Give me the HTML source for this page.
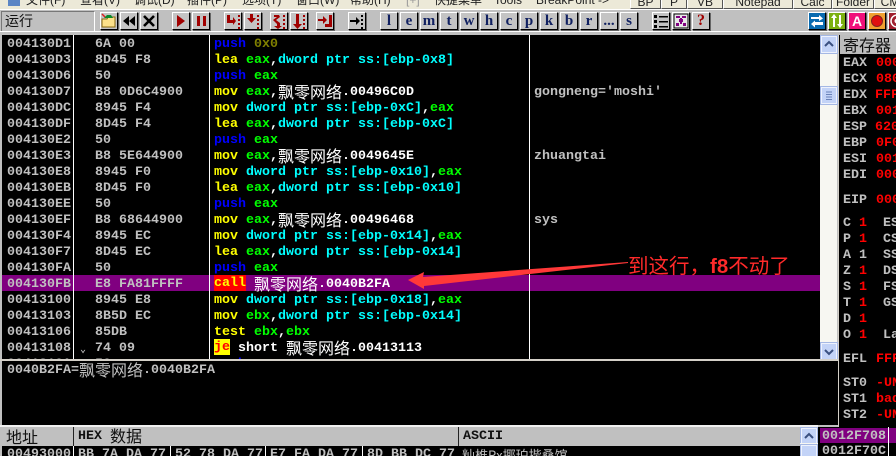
<!DOCTYPE html>
<html><head><meta charset="utf-8">
<style>
html,body{margin:0;padding:0;width:896px;height:456px;overflow:hidden;background:#c0c0c0}
#p{position:relative;width:896px;height:456px;overflow:hidden;background:#c0c0c0;font-family:"Liberation Mono","Noto Sans CJK SC",monospace;font-size:13.33px;font-weight:bold}
.a{position:absolute}
.t{position:absolute;white-space:pre;line-height:16px;height:16px;margin-top:2px}
.g{color:#c0c0c0}.w{color:#fff}.y{color:#ff0}.b{color:#00f}.l{color:#0f0}.c{color:#0ff}.o{color:#808000}.r{color:#f00}
.z{font-family:"Noto Sans CJK SC","WenQuanYi Zen Hei",sans-serif;font-size:16px;font-weight:normal;line-height:16px}
.t .z{display:inline-block;height:16px;vertical-align:top;position:relative;top:-2px}
.hl{display:inline-block;height:16px;vertical-align:top;position:relative;top:-2px;padding-top:2px;height:14px;line-height:14px}
.btn{position:absolute;top:12px;width:16px;height:16px;background:#c4c4c4;border:1px solid;border-color:#fff #000 #000 #fff;box-shadow:1px 1px 0 #666;overflow:hidden}
.btn svg{display:block;width:16px;height:16px}
.ltr{font-family:"Liberation Serif",serif;font-size:15px;color:#102060;text-align:center;line-height:16px;font-weight:bold}
.m{position:absolute;top:-7px;font:12px/14px "Liberation Sans","Noto Sans CJK SC",sans-serif;color:#222;white-space:pre}
.tb{position:absolute;top:-4px;height:11px;background:#ece9d8;border:1px solid;border-color:#fff #555 #555 #fff;font:12px/10px "Liberation Sans",sans-serif;color:#222;text-align:center;overflow:hidden}
.sb{position:absolute;width:14px;height:15px;background:#c3d3f7;border:1px solid #eef2fd;box-shadow:0 0 0 1px #a5b8e4}
</style></head><body><div id="p">

<!-- menu -->
<div class="a" style="left:0;top:0;width:896px;height:9px;background:#ece9d8;overflow:hidden">
<div class="a" style="left:8px;top:-6px;width:12px;height:12px;background:#5b85c5"></div>
<span class="m" style="left:26px">文件(F)</span><span class="m" style="left:80px">查看(V)</span><span class="m" style="left:134px">调试(D)</span><span class="m" style="left:187px">插件(P)</span><span class="m" style="left:242px">选项(T)</span><span class="m" style="left:296px">窗口(W)</span><span class="m" style="left:350px">帮助(H)</span><span class="m" style="left:406px;color:#999">[+]</span><span class="m" style="left:434px">快捷菜单</span><span class="m" style="left:494px">Tools</span><span class="m" style="left:536px">BreakPoint -&gt;</span>
<div class="tb" style="left:630px;width:29px">BP</div><div class="tb" style="left:661px;width:24px">P</div><div class="tb" style="left:687px;width:34px">VB</div><div class="tb" style="left:723px;width:68px">Notepad</div><div class="tb" style="left:793px;width:37px">Calc</div><div class="tb" style="left:832px;width:40px">Folder</div><div class="tb" style="left:874px;width:30px">CM</div>
</div>
<div class="a" style="left:0;top:9px;width:896px;height:1px;background:#fff"></div>

<!-- toolbar -->
<div class="a" style="left:1px;top:11px;width:92px;height:19px;border:1px solid;border-color:#777 #fff #fff #777"></div>
<div class="a z" style="left:5px;top:12px;font-size:14px;line-height:18px;color:#111">运行</div>

<div class="btn" style="left:100px"><svg viewBox="0 0 16 16"><path d="M1 6h5l1-2h7v10H1z" fill="#fde28a" stroke="#8a6a10"/><path d="M3 5l3-3 4 0 2 3z" fill="#0a8a2a"/><path d="M1 1l3 3" stroke="#e02020" stroke-width="1.5"/></svg></div>
<div class="btn" style="left:120px"><svg viewBox="0 0 16 16"><path d="M8 3v10L2 8zM14 3v10L8 8z" fill="#000"/></svg></div>
<div class="btn" style="left:140px"><svg viewBox="0 0 16 16"><path d="M3 3l10 10M13 3L3 13" stroke="#000" stroke-width="2.6"/></svg></div>
<div class="btn" style="left:172px"><svg viewBox="0 0 16 16"><path d="M4 2l8 6-8 6z" fill="#a00000"/></svg></div>
<div class="btn" style="left:192px"><svg viewBox="0 0 16 16"><path d="M4 3h3v10H4zM10 3h3v10h-3z" fill="#a00000"/></svg></div>
<div class="btn" style="left:224px"><svg viewBox="0 0 16 16"><path d="M2 2h3v5h3V4l3 4-3 4V10H2z" fill="#a00000"/><path d="M13 2h2v2h-2zM13 6h2v2h-2zM13 10h2v2h-2zM13 14h2v2h-2z" fill="#a00000"/></svg></div>
<div class="btn" style="left:244px"><svg viewBox="0 0 16 16"><path d="M5 1h3v4h3L6.500 10 2 5h3z" fill="#a00000"/><path d="M12 2h2v2h-2zM12 6h2v2h-2zM12 10h2v2h-2zM12 14h2v2h-2z" fill="#a00000"/></svg></div>
<div class="btn" style="left:270px"><svg viewBox="0 0 16 16"><path d="M3 2h5l1 2-4 3 4 3v3h2l-4 3-4-3h3v-2L2 7l4-3H3z" fill="#a00000"/><path d="M12 2h2v2h-2zM12 6h2v2h-2zM12 10h2v2h-2zM12 14h2v2h-2z" fill="#a00000"/></svg></div>
<div class="btn" style="left:290px"><svg viewBox="0 0 16 16"><path d="M5 1h3v10h3l-4.500 5L2 11h3z" fill="#a00000"/><path d="M12 2h2v2h-2zM12 6h2v2h-2zM12 10h2v2h-2zM12 14h2v2h-2z" fill="#a00000"/></svg></div>
<div class="btn" style="left:316px"><svg viewBox="0 0 16 16"><path d="M1 6h5V3l4 4-4 4V8H1z" fill="#a00000"/><path d="M12 2h3v12H8v-3h4z" fill="#a00000"/></svg></div>
<div class="btn" style="left:348px"><svg viewBox="0 0 16 16"><path d="M1 7h6V4l4 4-4 4V9H1z" fill="#000"/><path d="M12 2h2v2h-2zM12 6h2v2h-2zM12 10h2v2h-2zM12 14h2v2h-2z" fill="#000"/></svg></div>

<div class="btn ltr" style="left:380px">l</div>
<div class="btn ltr" style="left:400px">e</div>
<div class="btn ltr" style="left:420px">m</div>
<div class="btn ltr" style="left:440px">t</div>
<div class="btn ltr" style="left:460px">w</div>
<div class="btn ltr" style="left:480px">h</div>
<div class="btn ltr" style="left:500px">c</div>
<div class="btn ltr" style="left:520px">p</div>
<div class="btn ltr" style="left:540px">k</div>
<div class="btn ltr" style="left:560px">b</div>
<div class="btn ltr" style="left:580px">r</div>
<div class="btn ltr" style="left:600px">...</div>
<div class="btn ltr" style="left:620px">s</div>

<div class="btn" style="left:652px"><svg viewBox="0 0 16 16"><path d="M1 2h3v3H1zM1 7h3v3H1zM1 12h3v3H1zM6 3h9v1.500H6zM6 8h9v1.500H6zM6 13h9v1.500H6z" fill="#000"/></svg></div>
<div class="btn" style="left:672px;background:#e8e8e8"><svg viewBox="0 0 16 16"><rect x="1" y="1" width="14" height="14" fill="none" stroke="#000"/><path d="M3 3h4v2H3zM9 3h4v2H9zM6 6h4v3H6zM3 10h3v3H3zM10 10h3v3h-3zM7 5h2v6H7z" fill="#800080"/></svg></div>
<div class="btn" style="left:692px;color:#a00000;font:bold 16px/16px 'Liberation Serif',serif;text-align:center">?</div>

<div class="btn" style="left:808px;background:#0a6bb0"><svg viewBox="0 0 16 16"><path d="M2 4h8V2l4 3.500L10 8V6H2zM14 9H6V7.500L2 11l4 3.500V12h8z" fill="#fff"/></svg></div>
<div class="btn" style="left:828px;background:#7cb010"><svg viewBox="0 0 16 16"><path d="M5 1l3 4H6v9H4V5H2zM11 15l-3-4h2V2h2v9h2z" fill="#fff"/></svg></div>
<div class="btn" style="left:848px;background:#f0107a;color:#fff;font:bold 14px/16px 'Liberation Sans',sans-serif;text-align:center">A</div>
<div class="btn" style="left:868px;background:#f0a030"><svg viewBox="0 0 16 16"><circle cx="8" cy="8" r="5.500" fill="#e01010" stroke="#802020"/></svg></div>
<div class="btn" style="left:888px;background:#a02030"><svg viewBox="0 0 16 16"><circle cx="8" cy="8" r="6" fill="none" stroke="#fff" stroke-width="1.500"/><circle cx="8" cy="8" r="2.500" fill="#fff"/></svg></div>

<div class="a" style="left:0;top:31px;width:896px;height:1px;background:#fff"></div>

<!-- CPU pane -->
<div class="a" style="left:2px;top:35px;width:818px;height:324px;background:#000;overflow:hidden">
<div class="a" style="left:0;top:240px;width:818px;height:16px;background:#800080"></div>
<div class="a" style="left:71px;top:0;width:1px;height:324px;background:#fff"></div>
<div class="a" style="left:207px;top:0;width:1px;height:324px;background:#fff"></div>
<div class="a" style="left:527px;top:0;width:1px;height:324px;background:#fff"></div>

<div class="t g" style="left:5px;top:0">004130D1</div><div class="t g" style="left:93px;top:0">6A 00</div><div class="t" style="left:212px;top:0"><span class="b">push</span> <span class="o">0x0</span></div>
<div class="t g" style="left:5px;top:16px">004130D3</div><div class="t g" style="left:93px;top:16px">8D45 F8</div><div class="t" style="left:212px;top:16px"><span class="y">lea</span> <span class="l">eax</span><span class="w">,</span><span class="c">dword ptr ss:[ebp-0x8]</span></div>
<div class="t g" style="left:5px;top:32px">004130D6</div><div class="t g" style="left:93px;top:32px">50</div><div class="t" style="left:212px;top:32px"><span class="b">push</span> <span class="l">eax</span></div>
<div class="t g" style="left:5px;top:48px">004130D7</div><div class="t g" style="left:93px;top:48px">B8 0D6C4900</div><div class="t" style="left:212px;top:48px"><span class="y">mov</span> <span class="l">eax</span><span class="w">,<span class="z">飘零网络</span>.00496C0D</span></div><div class="t g" style="left:532px;top:48px">gongneng='moshi'</div>
<div class="t g" style="left:5px;top:64px">004130DC</div><div class="t g" style="left:93px;top:64px">8945 F4</div><div class="t" style="left:212px;top:64px"><span class="y">mov</span> <span class="c">dword ptr ss:[ebp-0xC]</span><span class="w">,</span><span class="l">eax</span></div>
<div class="t g" style="left:5px;top:80px">004130DF</div><div class="t g" style="left:93px;top:80px">8D45 F4</div><div class="t" style="left:212px;top:80px"><span class="y">lea</span> <span class="l">eax</span><span class="w">,</span><span class="c">dword ptr ss:[ebp-0xC]</span></div>
<div class="t g" style="left:5px;top:96px">004130E2</div><div class="t g" style="left:93px;top:96px">50</div><div class="t" style="left:212px;top:96px"><span class="b">push</span> <span class="l">eax</span></div>
<div class="t g" style="left:5px;top:112px">004130E3</div><div class="t g" style="left:93px;top:112px">B8 5E644900</div><div class="t" style="left:212px;top:112px"><span class="y">mov</span> <span class="l">eax</span><span class="w">,<span class="z">飘零网络</span>.0049645E</span></div><div class="t g" style="left:532px;top:112px">zhuangtai</div>
<div class="t g" style="left:5px;top:128px">004130E8</div><div class="t g" style="left:93px;top:128px">8945 F0</div><div class="t" style="left:212px;top:128px"><span class="y">mov</span> <span class="c">dword ptr ss:[ebp-0x10]</span><span class="w">,</span><span class="l">eax</span></div>
<div class="t g" style="left:5px;top:144px">004130EB</div><div class="t g" style="left:93px;top:144px">8D45 F0</div><div class="t" style="left:212px;top:144px"><span class="y">lea</span> <span class="l">eax</span><span class="w">,</span><span class="c">dword ptr ss:[ebp-0x10]</span></div>
<div class="t g" style="left:5px;top:160px">004130EE</div><div class="t g" style="left:93px;top:160px">50</div><div class="t" style="left:212px;top:160px"><span class="b">push</span> <span class="l">eax</span></div>
<div class="t g" style="left:5px;top:176px">004130EF</div><div class="t g" style="left:93px;top:176px">B8 68644900</div><div class="t" style="left:212px;top:176px"><span class="y">mov</span> <span class="l">eax</span><span class="w">,<span class="z">飘零网络</span>.00496468</span></div><div class="t g" style="left:532px;top:176px">sys</div>
<div class="t g" style="left:5px;top:192px">004130F4</div><div class="t g" style="left:93px;top:192px">8945 EC</div><div class="t" style="left:212px;top:192px"><span class="y">mov</span> <span class="c">dword ptr ss:[ebp-0x14]</span><span class="w">,</span><span class="l">eax</span></div>
<div class="t g" style="left:5px;top:208px">004130F7</div><div class="t g" style="left:93px;top:208px">8D45 EC</div><div class="t" style="left:212px;top:208px"><span class="y">lea</span> <span class="l">eax</span><span class="w">,</span><span class="c">dword ptr ss:[ebp-0x14]</span></div>
<div class="t g" style="left:5px;top:224px">004130FA</div><div class="t g" style="left:93px;top:224px">50</div><div class="t" style="left:212px;top:224px"><span class="b">push</span> <span class="l">eax</span></div>
<div class="t g" style="left:5px;top:240px">004130FB</div><div class="t g" style="left:93px;top:240px">E8 FA81FFFF</div><div class="t" style="left:212px;top:240px"><span class="y hl" style="background:#f00">call</span> <span class="w"><span class="z">飘零网络</span>.0040B2FA</span></div>
<div class="t g" style="left:5px;top:256px">00413100</div><div class="t g" style="left:93px;top:256px">8945 E8</div><div class="t" style="left:212px;top:256px"><span class="y">mov</span> <span class="c">dword ptr ss:[ebp-0x18]</span><span class="w">,</span><span class="l">eax</span></div>
<div class="t g" style="left:5px;top:272px">00413103</div><div class="t g" style="left:93px;top:272px">8B5D EC</div><div class="t" style="left:212px;top:272px"><span class="y">mov</span> <span class="l">ebx</span><span class="w">,</span><span class="c">dword ptr ss:[ebp-0x14]</span></div>
<div class="t g" style="left:5px;top:288px">00413106</div><div class="t g" style="left:93px;top:288px">85DB</div><div class="t" style="left:212px;top:288px"><span class="y">test</span> <span class="l">ebx</span><span class="w">,</span><span class="l">ebx</span></div>
<div class="t g" style="left:5px;top:304px">00413108</div><div class="t g" style="left:78px;top:306px;font-size:10px">⌄</div><div class="t g" style="left:93px;top:304px">74 09</div><div class="t" style="left:212px;top:304px"><span class="r hl" style="background:#ff0">je</span> <span class="w">short <span class="z">飘零网络</span>.00413113</span></div>
<div class="t g" style="left:5px;top:320px">0041310A</div><div class="t g" style="left:93px;top:320px">50</div><div class="t" style="left:212px;top:320px"><span class="b">push</span> <span class="l">eax</span></div>
</div>

<!-- scrollbar -->
<div class="a" style="left:820px;top:35px;width:17px;height:324px;background:#f7f7f2"></div>
<div class="sb" style="left:821px;top:36px"><svg width="14" height="15" viewBox="0 0 14 15" style="display:block"><path d="M3 9l4-4 4 4" fill="none" stroke="#3a5080" stroke-width="2"/></svg></div>
<div class="sb" style="left:821px;top:87px"><svg width="14" height="15" viewBox="0 0 14 15" style="display:block"><path d="M4 4h6M4 6.500h6M4 9h6M4 11.500h6" stroke="#6a82b8"/></svg></div>
<div class="sb" style="left:821px;top:343px"><svg width="14" height="15" viewBox="0 0 14 15" style="display:block"><path d="M3 6l4 4 4-4" fill="none" stroke="#3a5080" stroke-width="2"/></svg></div>

<!-- info pane -->
<div class="a" style="left:0;top:359px;width:838px;height:2px;background:#d4d0c8"></div>
<div class="a" style="left:2px;top:361px;width:836px;height:64px;background:#000">
<div class="t g" style="left:5px;top:0">0040B2FA=<span class="z">飘零网络</span>.0040B2FA</div>
</div>

<!-- dump -->
<div class="a" style="left:0;top:425px;width:818px;height:2px;background:#f0f0f0"></div>
<div class="a" style="left:73px;top:427px;width:1px;height:19px;background:#222"></div>
<div class="a" style="left:458px;top:427px;width:1px;height:19px;background:#222"></div>
<div class="a z" style="left:6px;top:427px;color:#111;line-height:18px">地址</div>
<div class="t" style="left:78px;top:427px;color:#111;line-height:16px">HEX <span class="z">数据</span></div>
<div class="t" style="left:463px;top:427px;color:#111;line-height:16px">ASCII</div>
<div class="a" style="left:800px;top:427px;width:18px;height:19px;background:#f7f7f2"></div>
<div class="sb" style="left:801px;top:428px"><svg width="14" height="15" viewBox="0 0 14 15" style="display:block"><path d="M3 9l4-4 4 4" fill="none" stroke="#3a5080" stroke-width="2"/></svg></div>
<div class="a" style="left:2px;top:446px;width:798px;height:10px;background:#000;overflow:hidden">
<div class="a" style="left:71px;top:0;width:1px;height:10px;background:#fff"></div>
<div class="a" style="left:168px;top:0;width:1px;height:10px;background:#fff"></div>
<div class="a" style="left:263px;top:0;width:1px;height:10px;background:#fff"></div>
<div class="a" style="left:360px;top:0;width:1px;height:10px;background:#fff"></div>
<div class="t g" style="left:5px;top:-1px">00493000</div>
<div class="t g" style="left:76px;top:-1px">BB 7A DA 77</div>
<div class="t g" style="left:173px;top:-1px">52 78 DA 77</div>
<div class="t g" style="left:268px;top:-1px">E7 FA DA 77</div>
<div class="t g" style="left:365px;top:-1px">8D BB DC 77</div>
<div class="t g z" style="left:460px;top:-1px;font-size:13px">籼椎Rx揶珀揩桑馆</div>
</div>
<div class="a" style="left:800px;top:443px;width:18px;height:13px;background:#f7f7f2"></div>
<div class="sb" style="left:801px;top:445px"></div>

<!-- stack -->
<div class="a" style="left:818px;top:427px;width:78px;height:29px;background:#000;overflow:hidden">
<div class="a" style="left:2px;top:1px;width:76px;height:15px;background:#800080"></div>
<div class="a" style="left:70px;top:0;width:1px;height:29px;background:#fff"></div>
<div class="t g" style="left:4px;top:0">0012F708</div>
<div class="t g" style="left:4px;top:15px">0012F70C</div>
</div>

<!-- registers -->
<div class="a" style="left:838px;top:35px;width:58px;height:392px;background:#000;overflow:hidden">
<div class="a" style="left:0;top:0;width:1px;height:392px;background:#d4d0c8"></div>
<div class="a" style="left:2px;top:0;width:56px;height:19px;background:#bdbdbd"></div>
<div class="a z" style="left:5px;top:0;color:#111;line-height:18px">寄存器</div>
<div class="t g" style="left:5px;top:19px">EAX</div><div class="t r" style="left:38px;top:19px">000</div>
<div class="t g" style="left:5px;top:35px">ECX</div><div class="t r" style="left:38px;top:35px">080</div>
<div class="t g" style="left:5px;top:51px">EDX</div><div class="t r" style="left:37px;top:51px">FFF</div>
<div class="t g" style="left:5px;top:67px">EBX</div><div class="t r" style="left:38px;top:67px">001</div>
<div class="t g" style="left:5px;top:83px">ESP</div><div class="t r" style="left:37px;top:83px">620</div>
<div class="t g" style="left:5px;top:99px">EBP</div><div class="t r" style="left:38px;top:99px">0F0</div>
<div class="t g" style="left:5px;top:115px">ESI</div><div class="t r" style="left:38px;top:115px">001</div>
<div class="t g" style="left:5px;top:131px">EDI</div><div class="t r" style="left:38px;top:131px">000</div>
<div class="t g" style="left:5px;top:156px">EIP</div><div class="t r" style="left:38px;top:156px">000</div>
<div class="t g" style="left:5px;top:179px">C</div><div class="t r" style="left:21px;top:179px">1</div><div class="t g" style="left:45px;top:179px">ES</div>
<div class="t g" style="left:5px;top:195px">P</div><div class="t r" style="left:21px;top:195px">1</div><div class="t g" style="left:45px;top:195px">CS</div>
<div class="t g" style="left:5px;top:211px">A</div><div class="t g" style="left:21px;top:211px">1</div><div class="t g" style="left:45px;top:211px">SS</div>
<div class="t g" style="left:5px;top:227px">Z</div><div class="t r" style="left:21px;top:227px">1</div><div class="t g" style="left:45px;top:227px">DS</div>
<div class="t g" style="left:5px;top:243px">S</div><div class="t r" style="left:21px;top:243px">1</div><div class="t g" style="left:45px;top:243px">FS</div>
<div class="t g" style="left:5px;top:259px">T</div><div class="t r" style="left:21px;top:259px">1</div><div class="t g" style="left:45px;top:259px">GS</div>
<div class="t g" style="left:5px;top:275px">D</div><div class="t r" style="left:21px;top:275px">1</div>
<div class="t g" style="left:5px;top:291px">O</div><div class="t r" style="left:21px;top:291px">1</div><div class="t g" style="left:45px;top:291px">La</div>
<div class="t g" style="left:5px;top:315px">EFL</div><div class="t r" style="left:38px;top:315px">FFF</div>
<div class="t g" style="left:5px;top:339px">ST0</div><div class="t r" style="left:38px;top:339px">-UN</div>
<div class="t g" style="left:5px;top:355px">ST1</div><div class="t r" style="left:38px;top:355px">bad</div>
<div class="t g" style="left:5px;top:371px">ST2</div><div class="t r" style="left:38px;top:371px">-UN</div>
</div>

<!-- annotation -->
<svg class="a" style="left:400px;top:255px" width="240" height="40" viewBox="0 0 240 40"><path d="M8 25L24 17L23 22L228 7L228 8L24 31L24 34Z" fill="#ff3838"/></svg>
<div class="a z" style="left:628px;top:252px;font-size:20.5px;line-height:24px;color:#ff2a2a;white-space:pre">到这行，<span style="font-family:'Liberation Sans',sans-serif;font-weight:bold">f8</span>不动了</div>

</div></body></html>
